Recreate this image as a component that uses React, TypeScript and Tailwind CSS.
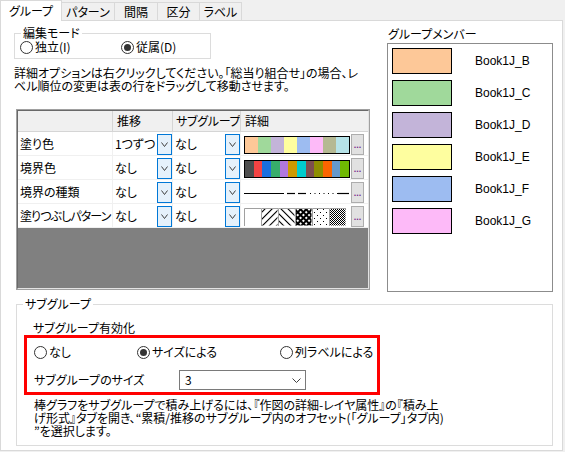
import React from "react";

const Chevron = ({ w = 8 }: { w?: number }) => (
  <svg width={w} height={5} viewBox={`0 0 ${w} 5`}>
    <path d={`M0.5 0.5 L${w / 2} ${4.5} L${w - 0.5} 0.5`} fill="none" stroke="#404040" strokeWidth="1" />
  </svg>
);

function Radio({ checked }: { checked?: boolean }) {
  return (
    <span className="w-[13px] h-[13px] rounded-full border border-[#333333] bg-white flex items-center justify-center shrink-0">
      {checked && <span className="w-[7px] h-[7px] rounded-full bg-[#333333]" />}
    </span>
  );
}

const pastel = ["#fdc898", "#a0d99b", "#c3b4d9", "#fefe9f", "#9dbcf1", "#fdbaf8", "#b5b993", "#b6e3e8"];
const bright = ["#4d4d4d", "#f44343", "#1a6fdf", "#37ad6b", "#b177de", "#cc9900", "#00cbcc", "#7d4e4e", "#8e8e00", "#fb6500", "#6699cc", "#6fb802"];

function ColorBar({ colors }: { colors: string[] }) {
  return (
    <div className="w-[106px] h-[18px] border border-black flex">
      {colors.map((c, i) => (
        <div key={i} className="flex-1 h-full" style={{ backgroundColor: c }} />
      ))}
    </div>
  );
}

function LineTypes() {
  const dots = [];
  for (let x = 66; x < 94; x += 4.5) dots.push(x);
  return (
    <svg width="106" height="18" viewBox="0 0 106 18">
      <line x1="0" y1="9.5" x2="40" y2="9.5" stroke="#000" strokeWidth="1.2" />
      <line x1="43" y1="9.5" x2="51" y2="9.5" stroke="#000" strokeWidth="1.2" />
      <line x1="54" y1="9.5" x2="62" y2="9.5" stroke="#000" strokeWidth="1.2" />
      {dots.map((x, i) => (
        <rect key={i} x={x} y="9" width="1" height="1" fill="#000" />
      ))}
      <line x1="94" y1="9.5" x2="105" y2="9.5" stroke="#000" strokeWidth="1.2" />
    </svg>
  );
}

function Patterns() {
  const fills = ["#fff", "url(#pfw)", "url(#pbw)", "url(#pcr)", "url(#pdt)", "url(#pds)"];
  return (
    <svg width="106" height="18" viewBox="0 0 106 18">
      <defs>
        <pattern id="pfw" width="5" height="5" patternUnits="userSpaceOnUse" patternTransform="rotate(45)">
          <rect x="0" y="0" width="5" height="5" fill="#fff" />
          <line x1="0.5" y1="0" x2="0.5" y2="5" stroke="#000" strokeWidth="1.1" />
        </pattern>
        <pattern id="pbw" width="5" height="5" patternUnits="userSpaceOnUse" patternTransform="rotate(-45)">
          <rect x="0" y="0" width="5" height="5" fill="#fff" />
          <line x1="0.5" y1="0" x2="0.5" y2="5" stroke="#000" strokeWidth="1.1" />
        </pattern>
        <pattern id="pcr" width="4" height="4" patternUnits="userSpaceOnUse" patternTransform="rotate(45)">
          <rect x="0" y="0" width="4" height="4" fill="#fff" />
          <rect x="0" y="0" width="2" height="4" fill="#000" />
          <rect x="0" y="0" width="4" height="2" fill="#000" />
        </pattern>
        <pattern id="pdt" width="6" height="6" patternUnits="userSpaceOnUse">
          <rect x="0" y="0" width="6" height="6" fill="#fff" />
          <rect x="1" y="1" width="1" height="1" fill="#000" />
          <rect x="4" y="4" width="1" height="1" fill="#000" />
        </pattern>
        <pattern id="pds" width="2" height="2" patternUnits="userSpaceOnUse">
          <rect x="0" y="0" width="2" height="2" fill="#fff" />
          <rect x="0" y="0" width="1" height="1" fill="#000" />
          <rect x="1" y="1" width="1" height="1" fill="#000" />
        </pattern>
      </defs>
      {fills.map((f, i) => (
        <g key={i}>
          <rect x={i * 17 + 0.5} y="0.5" width="16" height="17" fill={f} />
          <path d={`M${i * 17 + 0.5} 18 L${i * 17 + 0.5} 0.5 L${i * 17 + 17} 0.5`} fill="none" stroke="#a0a0a0" strokeWidth="1" />
        </g>
      ))}
    </svg>
  );
}

const DropBtn = () => (
  <div className="w-[15px] h-[21px] border border-[#0078d7] bg-[#e5f1fb] flex items-center justify-center shrink-0 mt-[2px]">
    <Chevron w={7} />
  </div>
);

const rows = [
  { label: "塗り色", lc: "", t: "1つずつ", s: "なし", d: "pastel" },
  { label: "境界色", lc: "", t: "なし", s: "なし", d: "bright" },
  { label: "境界の種類", lc: "", t: "なし", s: "なし", d: "line" },
  { label: "塗りつぶしパターン", lc: "tracking-[-0.9px]", t: "なし", s: "なし", d: "pattern" },
];

const members = [
  { c: "#fdc898", n: "Book1J_B" },
  { c: "#a0d99b", n: "Book1J_C" },
  { c: "#c3b4d9", n: "Book1J_D" },
  { c: "#fefe9f", n: "Book1J_E" },
  { c: "#9dbcf1", n: "Book1J_F" },
  { c: "#fdbaf8", n: "Book1J_G" },
];

export default function App() {
  return (
    <div className="w-[565px] h-[452px] bg-[#f0f0f0] text-[12px] leading-[14px] text-black font-['Noto_Sans_CJK_JP',sans-serif] [font-feature-settings:'palt'] overflow-hidden">
      {/* tabs */}
      <div className="flex items-end h-[20px]">
        <div className="relative z-10 -mb-[1px] h-[21px] w-[62px] bg-white border border-b-0 border-[#d9d9d9] flex items-center justify-center">グループ</div>
        <div className="h-[18px] w-[53px] border-t border-r border-[#d9d9d9] flex items-center justify-center">パターン</div>
        <div className="h-[18px] w-[43px] border-t border-r border-[#d9d9d9] flex items-center justify-center">間隔</div>
        <div className="h-[18px] w-[42px] border-t border-r border-[#d9d9d9] flex items-center justify-center">区分</div>
        <div className="h-[18px] w-[42px] border-t border-r border-[#d9d9d9] flex items-center justify-center">ラベル</div>
      </div>
      {/* panel */}
      <div className="w-[563px] h-[431px] bg-white border border-[#d9d9d9]">
        <div className="flex">
          {/* left column */}
          <div className="ml-[13px] w-[356px] flex flex-col">
            <fieldset className="mt-[5px] w-[197px] border border-[#dcdcdc] pb-[4px]">
              <legend className="ml-[6px] px-[2px] leading-[14px]">編集モード</legend>
              <div className="flex items-center h-[14px] pl-[5px]">
                <div className="w-[101px] flex items-center gap-[2px]">
                  <Radio />
                  <span>独立(I)</span>
                </div>
                <div className="flex items-center gap-[2px]">
                  <Radio checked />
                  <span>従属(D)</span>
                </div>
              </div>
            </fieldset>
            <div className="mt-[7px] leading-[13px] whitespace-nowrap">
              詳細オプションは右クリックしてください。「総当り組合せ」の場合、レ
              <br />
              ベル順位の変更は表の行をドラッグして移動させます。
            </div>
            {/* table */}
            <div className="mt-[17px] ml-[2px] w-[354px] h-[181px] border border-[#a0a0a0]">
              <div className="w-full h-full border border-t-[#696969] border-l-[#696969] border-b-[#e3e3e3] border-r-[#e3e3e3] bg-[#808080] flex flex-col">
                <div className="flex h-[21px] bg-[#f0f0f0] border-b border-[#d5d5d5] whitespace-nowrap">
                  <div className="w-[95px] border-r border-[#d5d5d5]" />
                  <div className="w-[60px] border-r border-[#d5d5d5] pl-[4px] flex items-center">推移</div>
                  <div className="w-[68px] border-r border-[#d5d5d5] pl-[3px] flex items-center overflow-hidden tracking-[-0.3px]">サブグループ</div>
                  <div className="flex-1 pl-[4px] flex items-center">詳細</div>
                </div>
                {rows.map((r, i) => (
                  <div key={i} className="flex h-[24px] bg-white border-b border-[#f0f0f0]">
                    <div className={`w-[95px] border-r border-[#f0f0f0] pl-[2px] flex items-center whitespace-nowrap overflow-hidden ${r.lc}`}>{r.label}</div>
                    <div className="w-[60px] border-r border-[#f0f0f0] pl-[2px] flex items-center justify-between whitespace-nowrap">
                      <span>{r.t}</span>
                      <DropBtn />
                    </div>
                    <div className="w-[68px] border-r border-[#f0f0f0] pl-[2px] flex items-center justify-between">
                      <span>{r.s}</span>
                      <DropBtn />
                    </div>
                    <div className="flex-1 pl-[3px] flex items-center gap-[1px]">
                      <div className="mt-[2px]">
                        {r.d === "pastel" && <ColorBar colors={pastel} />}
                        {r.d === "bright" && <ColorBar colors={bright} />}
                        {r.d === "line" && <LineTypes />}
                        {r.d === "pattern" && <Patterns />}
                      </div>
                      <div className="mt-[2px] w-[13px] h-[21px] bg-[#e1e1e1] border border-[#adadad] flex items-end justify-center pb-[4px] text-[9px] leading-[9px] text-[#7a2d8f] font-['Liberation_Sans',sans-serif] font-bold">...</div>
                    </div>
                  </div>
                ))}
              </div>
            </div>
          </div>
          {/* right column */}
          <div className="ml-[17px] flex flex-col">
            <div className="mt-[6px] pl-[1px]">グループメンバー</div>
            <div className="mt-[2px] w-[166px] h-[249px] border border-[#8c8c8c] pl-[4px] pt-[4px] flex flex-col gap-[6px]">
              {members.map((m, i) => (
                <div key={i} className="flex items-center">
                  <div className="w-[60px] h-[26px] border border-black" style={{ backgroundColor: m.c }} />
                  <span className="ml-[23px] font-['Liberation_Sans',sans-serif]">{m.n}</span>
                </div>
              ))}
            </div>
          </div>
        </div>
        {/* subgroup */}
        <fieldset className="mt-[5px] ml-[15px] w-[537px] border border-[#dcdcdc] pb-[8px]">
          <legend className="ml-[6px] px-[2px] leading-[14px]">サブグループ</legend>
          <div className="mt-[10px] ml-[16px]">サブグループ有効化</div>
          <div className="ml-[7px] w-[356px] h-[60px] border-[3px] border-[#ff0000] flex flex-col">
            <div className="mt-[7px] pl-[7px] h-[14px] flex items-center">
              <div className="w-[103px] flex items-center gap-[2px]">
                <Radio />
                <span>なし</span>
              </div>
              <div className="w-[143px] flex items-center gap-[2px]">
                <Radio checked />
                <span>サイズによる</span>
              </div>
              <div className="flex items-center gap-[2px]">
                <Radio />
                <span>列ラベルによる</span>
              </div>
            </div>
            <div className="mt-[11px] pl-[7px] flex items-center">
              <div className="w-[145px]">サブグループのサイズ</div>
              <div className="w-[127px] h-[20px] border border-[#7a7a7a] bg-white flex items-center justify-between pl-[5px] pr-[4px]">
                <span>3</span>
                <Chevron w={9} />
              </div>
            </div>
          </div>
          <div className="mt-[3px] ml-[17px] leading-[13px] whitespace-nowrap">
            棒グラフをサブグループで積み上げるには、『作図の詳細-レイヤ属性』の『積み上
            <br />
            げ形式』タブを開き、“累積/推移のサブグループ内のオフセット(「グループ」タブ内)
            <br />
            ”を選択します。
          </div>
        </fieldset>
      </div>
    </div>
  );
}
